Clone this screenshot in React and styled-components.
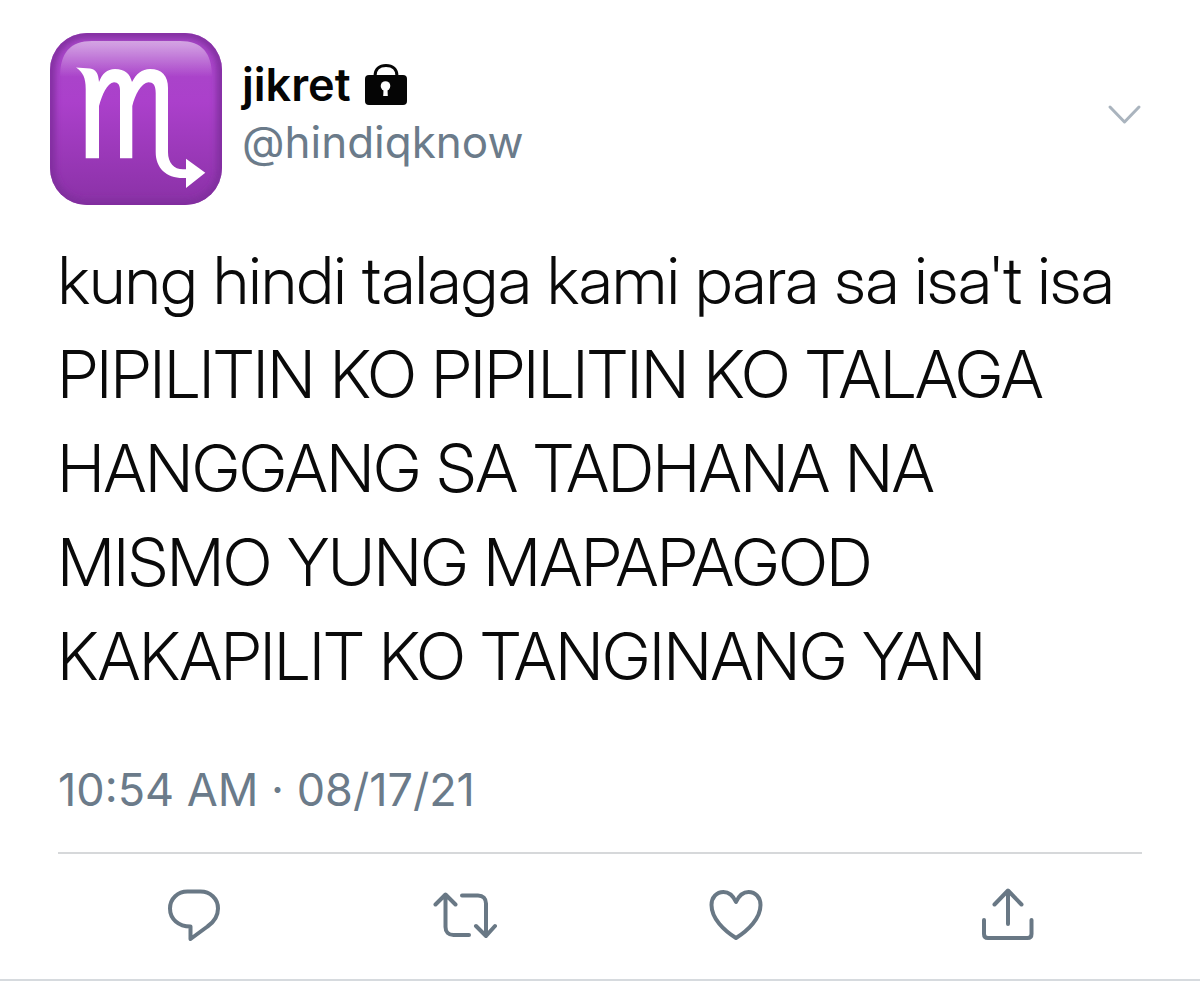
import styled, { createGlobalStyle } from "styled-components";

const GlobalStyle = createGlobalStyle`
  * {
    box-sizing: border-box;
  }

  body {
    margin: 0;
    background-color: #ffffff;
    font-family: Inter, "Liberation Sans", sans-serif;
  }
`;

const Tweet = styled.article`
  display: flex;
  flex-direction: column;
  border-bottom: 2px solid #d6dade;
`;

const Header = styled.header`
  display: flex;
  align-items: flex-start;
  gap: 20px;
  padding: 33px 58px 0 50px;
`;

const Avatar = styled.svg`
  flex: none;
  width: 172px;
  height: 172px;
`;

const Author = styled.div`
  flex: 1;
  padding-top: 24px;
`;

const Name = styled.h1`
  display: flex;
  align-items: center;
  gap: 14px;
  margin: 0;
  color: #050505;
  font-size: 45px;
  font-weight: 600;
  line-height: 56px;
`;

const Handle = styled.a`
  display: block;
  color: #6b7b8a;
  font-size: 44px;
  line-height: 58px;
  text-decoration: none;
`;

const IconButton = styled.button`
  display: flex;
  padding: 0;
  border: none;
  background: none;
  color: ${(props) => props.$color || "#697885"};
  cursor: pointer;
`;

const MenuButton = styled(IconButton)`
  margin-top: 70px;
`;

const Icon = styled.svg`
  display: block;
  fill: none;
  stroke: currentColor;
  stroke-width: ${(props) => props.$stroke || 4};
  stroke-linecap: round;
  stroke-linejoin: round;
`;

const Content = styled.p`
  margin: 28px 58px 0;
  color: #0a0a0a;
  font-family: "Inter Display", Inter, "Liberation Sans", sans-serif;
  font-size: 66px;
  font-weight: 300;
  font-variation-settings: "opsz" 32;
  line-height: 94px;
  white-space: pre-line;
`;

const Timestamp = styled.time`
  margin: 60px 58px 0;
  color: #6b7b8a;
  font-size: 45px;
  line-height: 54px;
`;

const Actions = styled.footer`
  display: grid;
  grid-template-columns: repeat(4, 1fr);
  justify-items: center;
  align-items: center;
  margin: 35px 58px 0;
  padding: 33px 0 36px;
  border-top: 2px solid #d6d8da;
`;

const text = `kung hindi talaga kami para sa isa't isa
PIPILITIN KO PIPILITIN KO TALAGA
HANGGANG SA TADHANA NA
MISMO YUNG MAPAPAGOD
KAKAPILIT KO TANGINANG YAN`;

function ScorpioAvatar() {
  return (
    <Avatar viewBox="0 0 172 172" role="img" aria-label="jikret">
      <defs>
        <linearGradient id="base" x1="0" y1="0" x2="0" y2="1">
          <stop offset="0" stopColor="#a848c8" />
          <stop offset="0.4" stopColor="#ab40cb" />
          <stop offset="1" stopColor="#8a31a6" />
        </linearGradient>
        <linearGradient id="shine" x1="0" y1="0" x2="0" y2="1">
          <stop offset="0" stopColor="#ffffff" stopOpacity="0.52" />
          <stop offset="1" stopColor="#ffffff" stopOpacity="0" />
        </linearGradient>
        <filter id="soft" x="-10%" y="-10%" width="120%" height="120%">
          <feGaussianBlur stdDeviation="3" />
        </filter>
        <clipPath id="tile">
          <rect width="172" height="172" rx="37" />
        </clipPath>
      </defs>
      <g clipPath="url(#tile)">
        <rect width="172" height="172" fill="url(#base)" />
        <rect
          x="1"
          y="1"
          width="170"
          height="170"
          rx="36"
          fill="none"
          stroke="#7f2f9d"
          strokeWidth="8"
          filter="url(#soft)"
        />
        <path
          d="M10 44 C10 20 20 8 42 8 H130 C152 8 162 20 162 44 Z"
          fill="url(#shine)"
        />
      </g>
      <path
        d="M26 34.5 L40 35.5 C46 36 48.5 41 49 49 C52 41 57 36 65 36 C75 36 80 41 82 49 C86 41 92 36 100 36 C112 36 118 43 118 55 V119 C118 130 124 136.3 133 136.3 H136 V125.7 L155.3 139.7 L136 155 V145 H133 C116 145 105.7 135 105.7 119 V60 C105.7 52 103 49.3 98.5 49.3 C91 50 85 62 82.3 73 V125.3 H70 V58 C70 52 68 49.3 64 49.3 C57 50 52 62 49 73 V125.3 H35.7 V56 C35.7 45 33 39 26 34.5 Z"
        fill="#ffffff"
      />
    </Avatar>
  );
}

function LockIcon() {
  return (
    <svg width="42" height="42" viewBox="0 0 42 42" aria-label="Protected">
      <path
        d="M10 14 V12 C10 5 14.5 1.5 21 1.5 C27.500 1.5 32 5 32 12 V14"
        fill="none"
        stroke="#050505"
        strokeWidth="3"
      />
      <rect y="11" width="42" height="30" rx="4" fill="#050505" />
      <circle cx="20.5" cy="22" r="4.8" fill="#ffffff" />
      <path d="M18.6 24 H22.4 L22.8 32 H18.2 Z" fill="#ffffff" />
    </svg>
  );
}

function App() {
  return (
    <>
      <GlobalStyle />
      <Tweet>
        <Header>
          <ScorpioAvatar />
          <Author>
            <Name>
              jikret <LockIcon />
            </Name>
            <Handle href="#profile">@hindiqknow</Handle>
          </Author>
          <MenuButton $color="#aab4be" aria-label="More">
            <Icon width="35" height="22" viewBox="0 0 35 22" $stroke={3}>
              <path d="M3 4 L17.5 19 L32 4" />
            </Icon>
          </MenuButton>
        </Header>
        <Content>{text}</Content>
        <Timestamp dateTime="2021-08-17T10:54">10:54 AM · 08/17/21</Timestamp>
        <Actions>
          <IconButton aria-label="Reply">
            <Icon width="52" height="56" viewBox="0 0 52 56">
              <path d="M19.5 4.5 H32.5 C42 4.5 50 11.5 50 21.5 C50 29 46 35 39.5 39.5 L22.5 52 V39.5 C10.500 39.5 2 32 2 21.5 C2 11.5 10 4.5 19.5 4.5 Z" />
            </Icon>
          </IconButton>
          <IconButton aria-label="Retweet">
            <Icon width="64" height="56" viewBox="0 0 64 56">
              <path d="M2.5 17.5 L12.5 7.5 L22.5 17.5 M12.5 8 V40 C12.5 45 15.5 48 20.5 48 H36" />
              <path d="M29 8.5 H45 C50 8.5 53 11.5 53 16.5 V48 M43 39 L53 49 L62 39" />
            </Icon>
          </IconButton>
          <IconButton aria-label="Like">
            <Icon width="54" height="56" viewBox="0 0 54 56">
              <path d="M27 15 C24 8.5 20 5 14.5 5 C7.5 5 2.5 10.5 2.5 18 C2.5 31.5 15 43.5 27 51 C39 43.5 51.5 31.5 51.5 18 C51.5 10.5 46.5 5 39.5 5 C34 5 30 8.5 27 15 Z" />
            </Icon>
          </IconButton>
          <IconButton aria-label="Share">
            <Icon width="54" height="56" viewBox="0 0 54 56">
              <path d="M28 37 V4 M14.5 17.5 L28 3.5 L41.5 17.5" />
              <path d="M4 33 V47 C4 49.5 5.5 51 8 51 H47.5 C50 51 51.5 49.5 51.5 47 V33" />
            </Icon>
          </IconButton>
        </Actions>
      </Tweet>
    </>
  );
}

export default App;
